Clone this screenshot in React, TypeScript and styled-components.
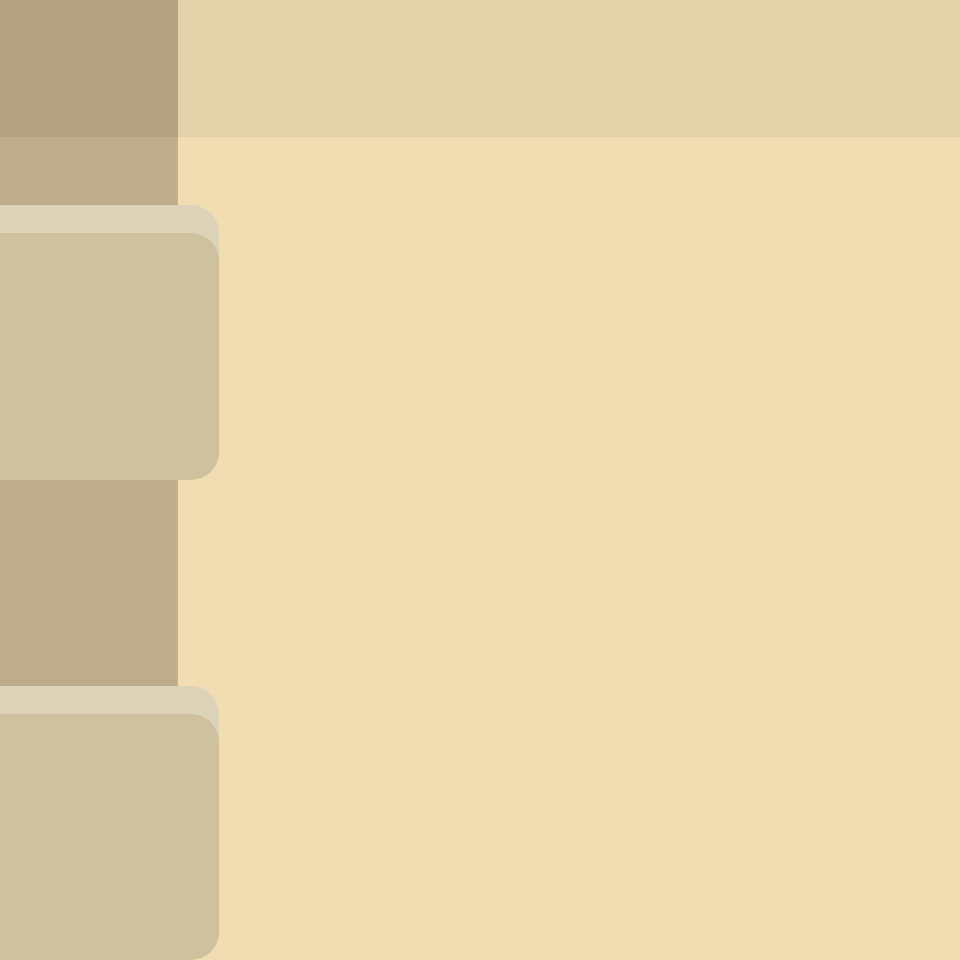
import React from "react";
import styled, { createGlobalStyle } from "styled-components";

const Global = createGlobalStyle`
  html, body { margin: 0; padding: 0; background: #f1ddb1; }
  body { font-family: "Liberation Sans", Arial, sans-serif; }
`;

const Page = styled.div`
  display: grid;
  grid-template-columns: 178px 1fr;
  height: 960px;
  overflow: hidden;
  background: #f1ddb1;
`;

const Sidebar = styled.aside`
  position: relative;
  z-index: 1;
  display: flex;
  flex-direction: column;
  background: #bead8b;
  box-shadow: inset -1px 0 0 #c4b493;
`;

const SidebarHead = styled.div`
  height: 137px;
  flex: none;
  background: #b3a383;
`;

const CardList = styled.div`
  display: flex;
  flex-direction: column;
  gap: 206px;
  padding-top: 68px;
`;

const Card = styled.div<{ $height: number }>`
  width: 219px;
  height: ${(p) => p.$height}px;
  flex: none;
  display: flex;
  flex-direction: column;
  background: #ddd3b9;
  border-radius: 0 28px 28px 0;
`;

const CardHeader = styled.div`
  height: 28px;
  flex: none;
`;

const CardBody = styled.div`
  flex: 1;
  background: #d0c19e;
  border-radius: 0 28px 28px 0;
`;

const Main = styled.main`
  display: flex;
  flex-direction: column;
`;

const TopBar = styled.header`
  height: 137px;
  background: #e2d2a9;
`;

const Content = styled.section`
  flex: 1;
  background: #f1ddb1;
`;

export default function App() {
  return (
    <>
      <Global />
      <Page>
        <Sidebar>
          <SidebarHead />
          <CardList>
            <Card $height={275}>
              <CardHeader />
              <CardBody />
            </Card>
            <Card $height={274}>
              <CardHeader />
              <CardBody />
            </Card>
          </CardList>
        </Sidebar>
        <Main>
          <TopBar />
          <Content />
        </Main>
      </Page>
    </>
  );
}
